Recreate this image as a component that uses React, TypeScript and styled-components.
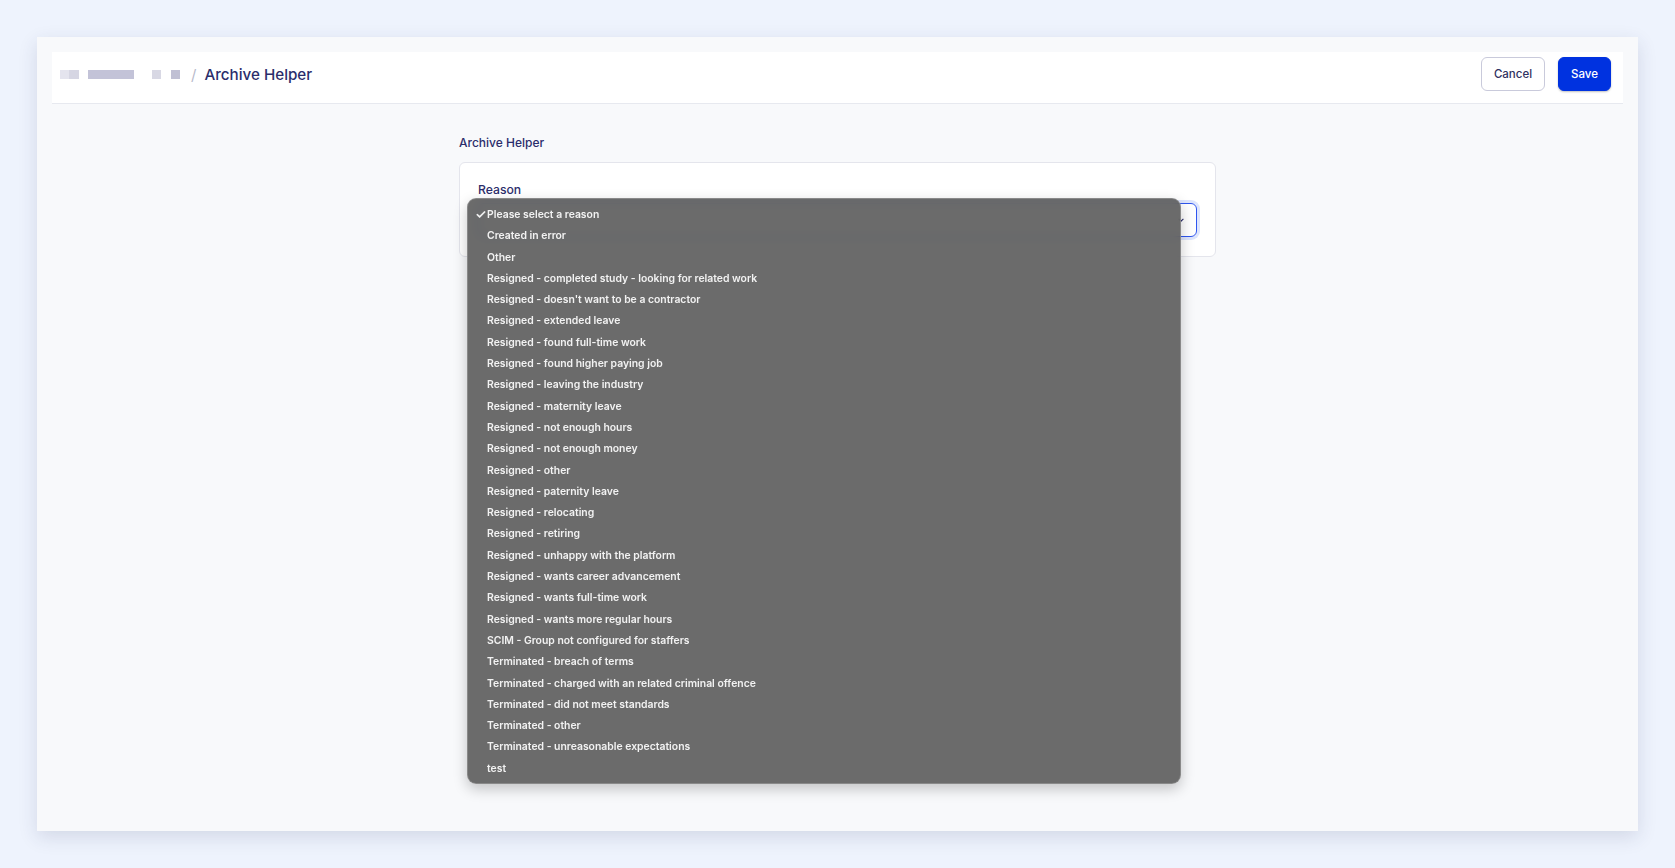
import React from 'react';
import styled, { createGlobalStyle } from 'styled-components';

const GlobalStyle = createGlobalStyle`
  html, body {
    margin: 0;
    padding: 0;
    background: #eef3fd;
    font-family: Inter, "Noto Sans", sans-serif;
  }
  * { box-sizing: border-box; }
`;

const Page = styled.div`
  height: 868px;
  padding: 37px;
`;

const Frame = styled.div`
  height: 100%;
  background: #f8f9fb;
  padding: 15px;
  box-shadow: 0 6px 18px rgba(40, 50, 90, 0.14);
`;

const Header = styled.header`
  height: 52px;
  background: #ffffff;
  border-bottom: 1px solid #e7e9ef;
  display: flex;
  align-items: center;
  justify-content: space-between;
  padding: 0 12px 7px 8px;
`;

const Crumbs = styled.div`
  display: flex;
  align-items: center;
`;

const Blur = styled.span<{ w: number; tone: string; gap: number }>`
  display: inline-block;
  width: ${(p) => p.w}px;
  height: 9px;
  background: ${(p) => p.tone};
  margin-right: ${(p) => p.gap}px;
`;

const Slash = styled.span`
  color: #b8bacb;
  font-size: 15px;
  margin: 0 8px 0 1px;
`;

const Title = styled.h1`
  margin: 0;
  font-size: 15.2px;
  font-weight: 500;
  color: #2b2d6b;
`;

const Actions = styled.div`
  display: flex;
  gap: 13px;
`;

const Button = styled.button<{ primary?: boolean }>`
  height: 34px;
  padding: 0 12px;
  border-radius: 6px;
  font-family: inherit;
  font-size: 11.5px;
  font-weight: 500;
  cursor: pointer;
  border: 1px solid ${(p) => (p.primary ? '#0032e0' : '#c9cadb')};
  background: ${(p) => (p.primary ? '#0032e0' : '#ffffff')};
  color: ${(p) => (p.primary ? '#ffffff' : '#2f3160')};
  box-shadow: ${(p) => (p.primary ? '0 1px 2px rgba(0,0,0,0.25)' : 'none')};
`;

const Body = styled.main`
  width: 757px;
  margin: 30px auto 0;
`;

const SectionLabel = styled.div`
  font-size: 12px;
  font-weight: 500;
  color: #2b2d6b;
  line-height: 18px;
  margin-bottom: 10px;
`;

const Card = styled.div`
  position: relative;
  background: #ffffff;
  border: 1px solid #e4e5ec;
  border-radius: 6px;
  padding: 18px 18px 19px;
`;

const FieldLabel = styled.label`
  display: block;
  font-size: 12.2px;
  font-weight: 500;
  color: #2b2d6b;
  line-height: 18px;
  margin-bottom: 4px;
`;

const SelectBox = styled.div`
  height: 34px;
  border: 1.5px solid #2f56ef;
  border-radius: 6px;
  box-shadow: 0 0 0 3px #dde5fd;
  display: flex;
  align-items: center;
  justify-content: flex-end;
  padding-right: 11px;
  color: #2b2d6b;
`;

const Menu = styled.ul`
  position: absolute;
  left: 7px;
  top: 35px;
  width: 714px;
  margin: 0;
  padding: 5px 0 4px;
  list-style: none;
  background: rgba(92, 92, 92, 0.91);
  backdrop-filter: blur(5px);
  border: 1px solid rgba(150, 150, 150, 0.7);
  border-radius: 9px;
  box-shadow: 0 5px 14px rgba(0, 0, 0, 0.22);
  z-index: 2;
`;

const Option = styled.li`
  position: relative;
  height: 21.3px;
  line-height: 21.3px;
  padding-left: 19px;
  font-size: 10.4px;
  font-weight: 600;
  color: #f2f2f2;
  white-space: nowrap;
`;

const Check = styled.span`
  position: absolute;
  left: 7px;
  font-size: 13px;
`;

const reasons = [
  'Created in error',
  'Other',
  'Resigned - completed study - looking for related work',
  "Resigned - doesn't want to be a contractor",
  'Resigned - extended leave',
  'Resigned - found full-time work',
  'Resigned - found higher paying job',
  'Resigned - leaving the industry',
  'Resigned - maternity leave',
  'Resigned - not enough hours',
  'Resigned - not enough money',
  'Resigned - other',
  'Resigned - paternity leave',
  'Resigned - relocating',
  'Resigned - retiring',
  'Resigned - unhappy with the platform',
  'Resigned - wants career advancement',
  'Resigned - wants full-time work',
  'Resigned - wants more regular hours',
  'SCIM - Group not configured for staffers',
  'Terminated - breach of terms',
  'Terminated - charged with an related criminal offence',
  'Terminated - did not meet standards',
  'Terminated - other',
  'Terminated - unreasonable expectations',
  'test',
];

export default function App() {
  return (
    <>
      <GlobalStyle />
      <Page>
        <Frame>
          <Header>
            <Crumbs>
              <Blur w={9} tone="#e4e4ee" gap={0} />
              <Blur w={10} tone="#d6d6e3" gap={9} />
              <Blur w={46} tone="#c3c3d8" gap={18} />
              <Blur w={9} tone="#d8d8e4" gap={10} />
              <Blur w={9} tone="#c0c0d4" gap={10} />
              <Slash>/</Slash>
              <Title>Archive Helper</Title>
            </Crumbs>
            <Actions>
              <Button>Cancel</Button>
              <Button primary>Save</Button>
            </Actions>
          </Header>
          <Body>
            <SectionLabel>Archive Helper</SectionLabel>
            <Card>
              <FieldLabel>Reason</FieldLabel>
              <SelectBox>
                <svg width="8" height="8" viewBox="0 0 10 10" fill="none">
                  <path d="M2 3.5 5 6.5 8 3.5" stroke="#2b2d6b" strokeWidth="1.4" />
                </svg>
              </SelectBox>
              <Menu>
                <Option>
                  <Check>✓</Check>
                  Please select a reason
                </Option>
                {reasons.map((r) => (
                  <Option key={r}>{r}</Option>
                ))}
              </Menu>
            </Card>
          </Body>
        </Frame>
      </Page>
    </>
  );
}
